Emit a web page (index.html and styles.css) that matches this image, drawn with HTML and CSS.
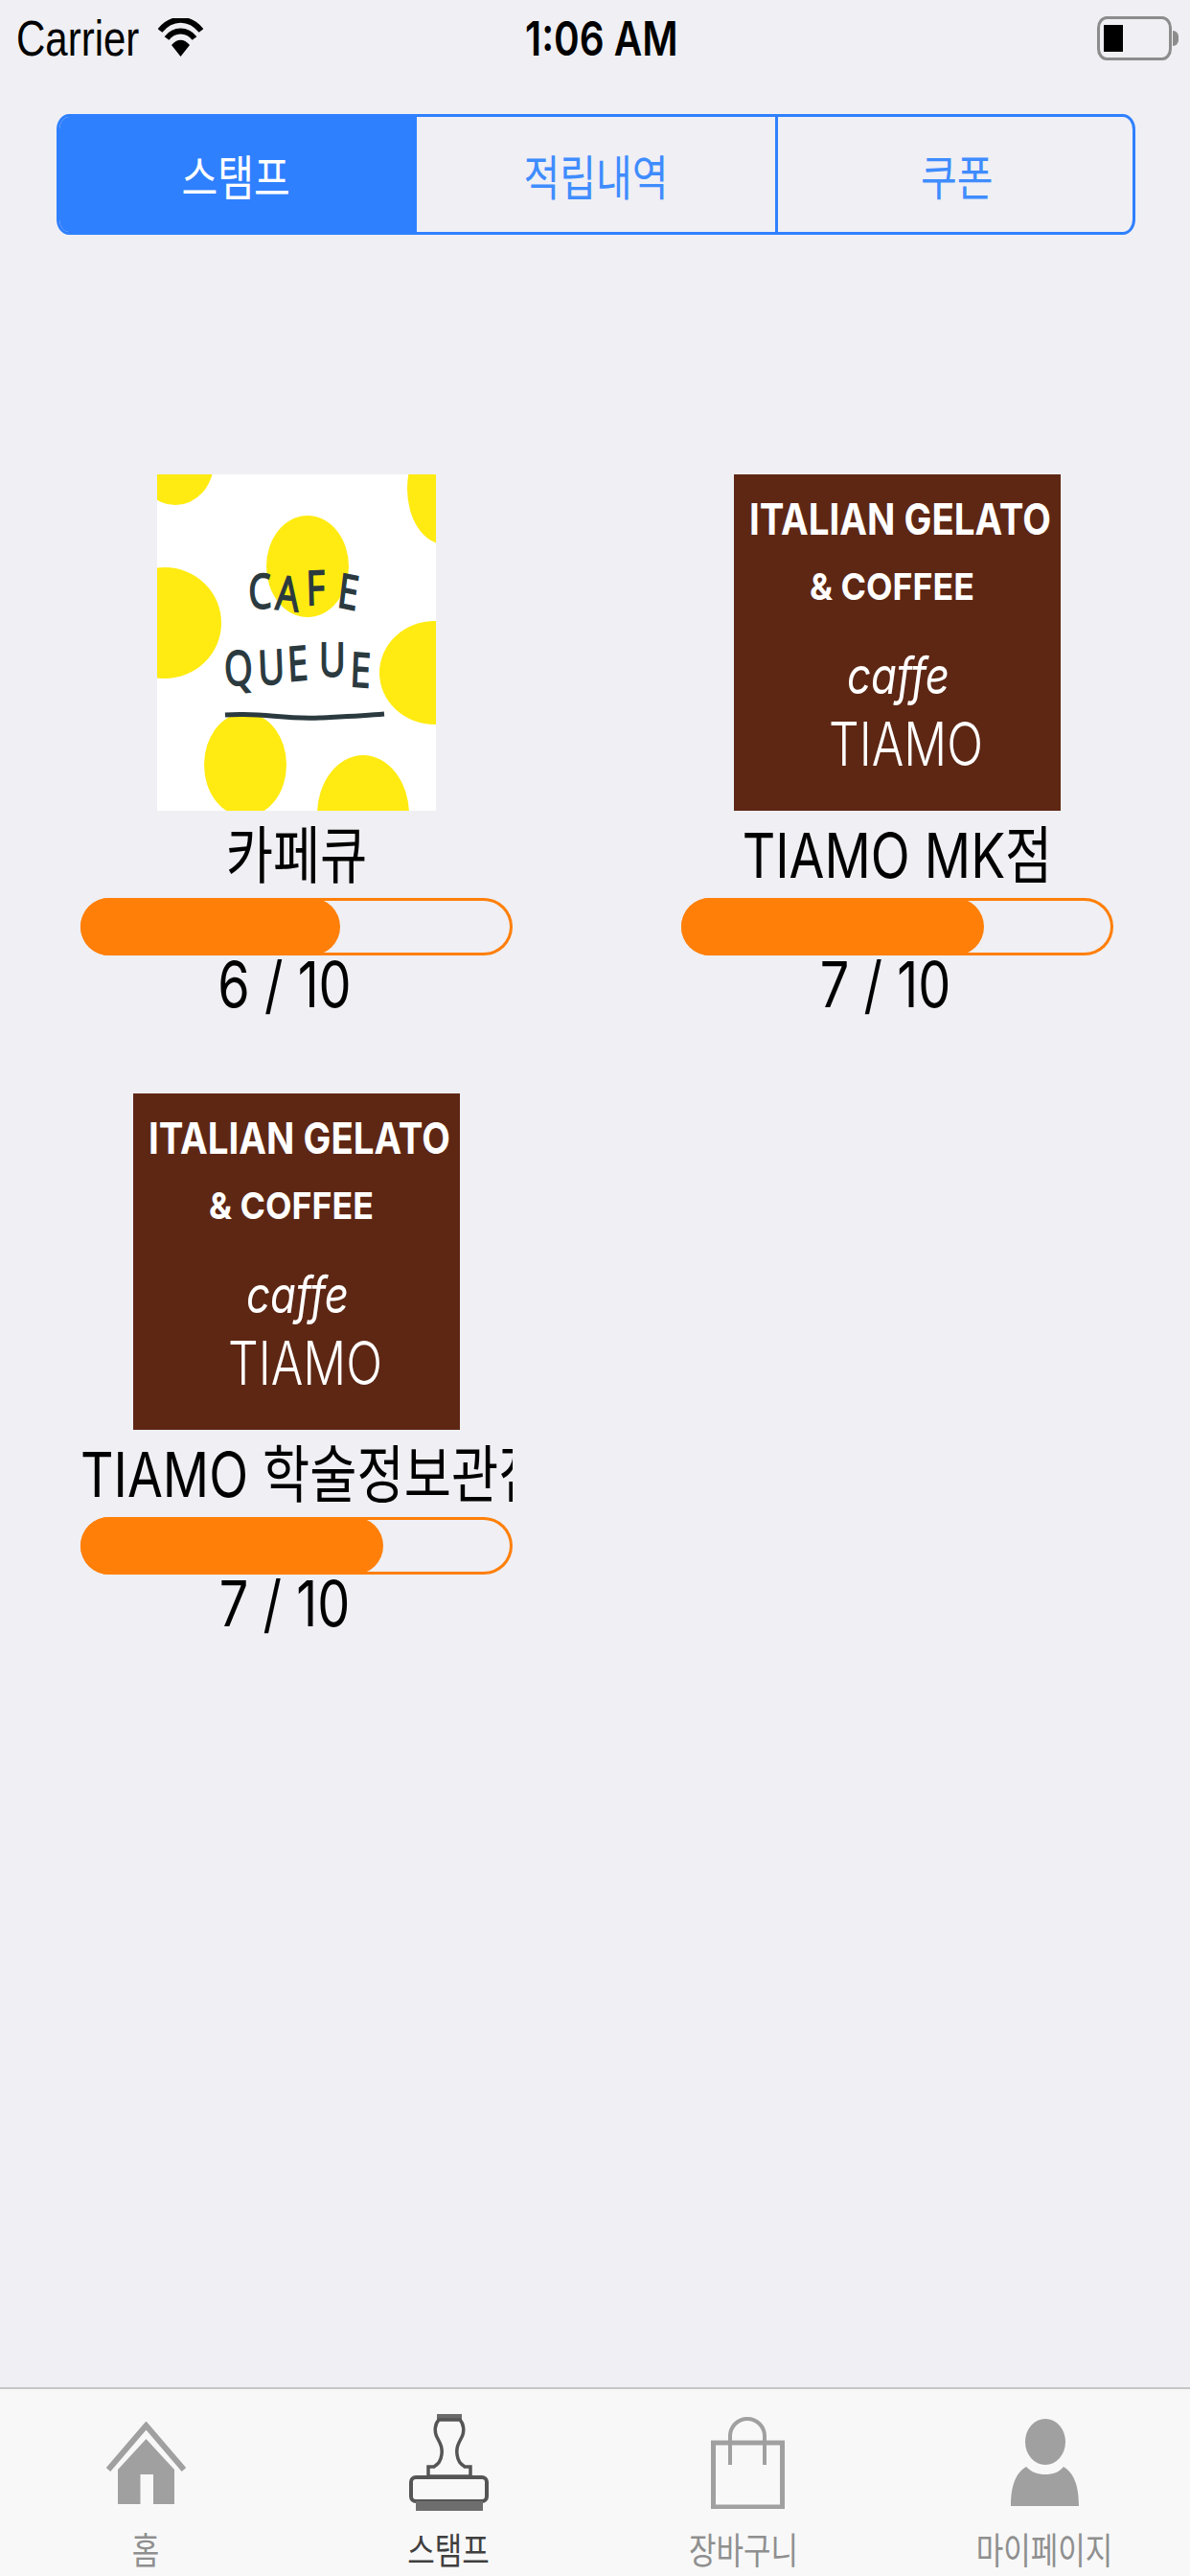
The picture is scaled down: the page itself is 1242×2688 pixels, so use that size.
FILE: index.html
```html
<!DOCTYPE html>
<html lang="ko">
<head>
    <meta charset="UTF-8">
    <meta name="viewport" content="width=device-width, initial-scale=1.0">
    <title>스탬프</title>
    <link rel="stylesheet" href="styles.css">
</head>
<body>

    <div class="status-bar">
        <div class="status-left">
            <span class="carrier">Carrier</span>
            <svg class="wifi" viewBox="0 0 47 40" width="47" height="40">
                <path d="M2 13C14-2 33-2 45 13" fill="none" stroke="#000" stroke-width="6"/>
                <path d="M9 21C17 11 30 11 38 21" fill="none" stroke="#000" stroke-width="6"/>
                <path d="M14 28C20 21 27 21 33 28L23.5 40Z" fill="#000"/>
            </svg>
        </div>
        <span class="time">1:06 AM</span>
        <div class="battery">
            <div class="battery-level"></div>
        </div>
        <div class="battery-nub"></div>
    </div>

    <!-- Section switch -->
    <div class="segments">
        <div class="segment active"><span>스탬프</span></div>
        <div class="segment"><span>적립내역</span></div>
        <div class="segment last"><span>쿠폰</span></div>
    </div>

    <!-- Stamp cards -->
    <div class="cards">
        <div class="card">
            <svg class="logo logo-queue" viewBox="0 0 291 351">
                <rect width="291" height="351" fill="#fff"/>
                <g fill="#ffeb11">
                    <ellipse cx="19" cy="-12" rx="40" ry="44"/>
                    <ellipse cx="300" cy="15" rx="39" ry="58"/>
                    <ellipse cx="157" cy="96" rx="43" ry="53"/>
                    <ellipse cx="8" cy="155" rx="59" ry="58"/>
                    <ellipse cx="290" cy="207" rx="58" ry="54"/>
                    <ellipse cx="92" cy="303" rx="43" ry="54"/>
                    <ellipse cx="215" cy="355" rx="48" ry="62"/>
                </g>
                <g transform="scale(1 1.3)">
                    <text class="hand" x="96 123 156 187" y="108 108 105 106" rotate="-3 5 -2 9">CAFE</text>
                    <text class="hand" x="71 106 137 169 201" y="170 169 166 162 170" rotate="-4 -3 -4 0 3">QUEUE</text>
                </g>
                <path d="M71 251C110 248 130 256 170 254C190 253 215 252 237 250" fill="none" stroke="#2b3a3f" stroke-width="5"/>
            </svg>
            <div class="name">카페큐</div>
            <div class="bar"><div class="fill" style="width:60%"></div></div>
            <div class="count">6 / 10</div>
        </div>

        <div class="card">
            <svg class="logo logo-tiamo" viewBox="0 0 341 351">
                <rect width="341" height="351" fill="#5e2714"/>
                <g transform="scale(1 1.217)" fill="#fff">
                    <text class="tiamo-bold" x="16" y="52" font-size="37" textLength="315" lengthAdjust="spacingAndGlyphs">ITALIAN GELATO</text>
                    <text class="tiamo-bold" x="79" y="108" font-size="32" textLength="172" lengthAdjust="spacingAndGlyphs">&amp; COFFEE</text>
                    <text class="tiamo-italic" x="118" y="188" font-size="44" textLength="107" lengthAdjust="spacingAndGlyphs">caffe</text>
                    <text class="tiamo-light" x="99" y="250" font-size="52" textLength="161" lengthAdjust="spacingAndGlyphs">TIAMO</text>
                </g>
            </svg>
            <div class="name">TIAMO MK점</div>
            <div class="bar"><div class="fill" style="width:70%"></div></div>
            <div class="count">7 / 10</div>
        </div>

        <div class="card">
            <svg class="logo logo-tiamo" viewBox="0 0 341 351">
                <rect width="341" height="351" fill="#5e2714"/>
                <g transform="scale(1 1.217)" fill="#fff">
                    <text class="tiamo-bold" x="16" y="52" font-size="37" textLength="315" lengthAdjust="spacingAndGlyphs">ITALIAN GELATO</text>
                    <text class="tiamo-bold" x="79" y="108" font-size="32" textLength="172" lengthAdjust="spacingAndGlyphs">&amp; COFFEE</text>
                    <text class="tiamo-italic" x="118" y="188" font-size="44" textLength="107" lengthAdjust="spacingAndGlyphs">caffe</text>
                    <text class="tiamo-light" x="99" y="250" font-size="52" textLength="161" lengthAdjust="spacingAndGlyphs">TIAMO</text>
                </g>
            </svg>
            <div class="name long">TIAMO 학술정보관점</div>
            <div class="bar"><div class="fill" style="width:70%"></div></div>
            <div class="count">7 / 10</div>
        </div>
    </div>

    <!-- Bottom navigation -->
    <div class="tab-bar">
        <div class="tab">
            <div class="tab-icon">
                <svg viewBox="0 0 83 86" width="83" height="86">
                    <path d="M41.5 18L71 50V86H49V55H35.5V86H12V50Z" fill="#a0a0a0"/>
                    <path d="M2 50L41.5 4L81 50" fill="none" stroke="#a0a0a0" stroke-width="6"/>
                </svg>
            </div>
            <span class="tab-label">홈</span>
        </div>
        <div class="tab current">
            <div class="tab-icon">
                <svg viewBox="0 0 83 101" width="83" height="101">
                    <rect x="29" y="0" width="26" height="7" fill="#6a6a6a"/>
                    <path d="M31 6C27 10 26 18 29 24C32 30 35 34 34 42C33 50 30 52 26 55H20V65H64V55H58C54 52 51 50 50 42C49 34 52 30 55 24C58 18 57 10 53 6Z" fill="none" stroke="#555" stroke-width="3.5"/>
                    <rect x="2" y="66" width="79" height="25" rx="5" fill="#f8f8f8" stroke="#555" stroke-width="4"/>
                    <rect x="7" y="91" width="70" height="10" fill="#6e6e6e"/>
                </svg>
            </div>
            <span class="tab-label">스탬프</span>
        </div>
        <div class="tab">
            <div class="tab-icon">
                <svg class="bag" viewBox="0 0 77 96" width="77" height="96">
                    <rect x="2.5" y="27" width="72" height="67" fill="none" stroke="#a0a0a0" stroke-width="5"/>
                    <path d="M20 50V20A18 18 0 0 1 56 20V50" fill="none" stroke="#a0a0a0" stroke-width="4"/>
                </svg>
            </div>
            <span class="tab-label">장바구니</span>
        </div>
        <div class="tab">
            <div class="tab-icon">
                <svg viewBox="0 0 71 91" width="71" height="91">
                    <ellipse cx="36" cy="24" rx="21" ry="24" fill="#a0a0a0"/>
                    <path d="M16 50C6 56 0 68 0 91H71C71 68 65 56 55 50C50 56 44 58 36 58C28 58 22 56 16 50Z" fill="#a0a0a0"/>
                </svg>
            </div>
            <span class="tab-label">마이페이지</span>
        </div>
    </div>

</body>
</html>
```

FILE: styles.css
```css
body {
    margin: 0;
    height: 2688px;
    overflow: hidden;
    display: flex;
    flex-direction: column;
    background-color: #efeff4;
    color: #000;
    font-family: Inter, "Noto Sans CJK KR", sans-serif;
}

/* status bar */
.status-bar {
    height: 80px;
    box-sizing: border-box;
    padding: 19px 12px 0 17px;
    display: flex;
    align-items: flex-start;
}
.status-left {
    width: 531px;
    display: flex;
    align-items: flex-start;
    gap: 20px;
}
.carrier, .time {
    display: block;
    line-height: 40px;
    transform: scaleY(1.217);
}
.carrier {
    font-family: "Liberation Sans", sans-serif;
    font-size: 42px;
    margin-top: 2px;
}
.time {
    font-size: 40.5px;
    font-weight: 600;
    margin-top: 2px;
}
.battery {
    margin-left: auto;
    width: 78px;
    height: 46px;
    margin-top: -2px;
    box-sizing: border-box;
    border: 3px solid #8c8c8c;
    border-radius: 10px / 12px;
    padding: 6px 4px;
}
.battery-level {
    width: 20px;
    height: 100%;
    background-color: #000;
}
.battery-nub {
    width: 6px;
    height: 16px;
    margin: 13px 0 0 1px;
    background-color: #8c8c8c;
    border-radius: 0 6px 6px 0;
}

/* segmented control */
.segments {
    margin: 39px 57px 0 59px;
    height: 126px;
    box-sizing: border-box;
    border: 3px solid #2f80ff;
    border-radius: 13px / 16px;
    display: grid;
    grid-template-columns: 1fr 1fr 1fr;
    overflow: hidden;
}
.segment {
    display: flex;
    align-items: center;
    justify-content: center;
    color: #3f8cff;
    font-size: 41px;
}
.segment span {
    transform: scaleY(1.217);
}
.segment.last {
    border-left: 3px solid #2f80ff;
    padding-left: 4px;
}
.segment.active {
    background-color: #2f80ff;
    color: #fff;
    padding-right: 5px;
}

/* stamp cards */
.cards {
    margin-top: 250px;
    padding-left: 84px;
    display: grid;
    grid-template-columns: 451px 451px;
    column-gap: 176px;
    row-gap: 88px;
}
.card {
    display: flex;
    flex-direction: column;
    align-items: center;
    width: 451px;
}
.logo {
    display: block;
    height: 351px;
}
.logo-queue {
    width: 291px;
}
.logo-tiamo {
    width: 341px;
}
.hand {
    font-family: "Open Sans", sans-serif;
    font-size: 38px;
    fill: #2b3a3f;
    stroke: #2b3a3f;
    stroke-width: 1.4px;
}
.tiamo-bold {
    font-family: Inter, sans-serif;
    font-weight: 700;
}
.tiamo-italic {
    font-family: Inter, sans-serif;
    font-style: italic;
}
.tiamo-light {
    font-family: Inter, sans-serif;
    font-weight: 300;
}
.name {
    height: 60px;
    margin: 17px 0 14px;
    font-size: 53.5px;
    line-height: 60px;
    white-space: nowrap;
    transform: scaleY(1.217);
}
/* long names run off the card and get cut at its edge */
.name.long {
    width: 100%;
    overflow-x: clip;
}
.bar {
    width: 100%;
    height: 60px;
    border-radius: 30px;
    box-shadow: inset 0 0 0 3px #ff7f08;
}
.fill {
    height: 100%;
    border-radius: 30px;
    background-color: #ff7f08;
}
.count {
    height: 50px;
    margin: 6px 25px 0 0;
    font-size: 54px;
    line-height: 50px;
    transform: scaleY(1.217);
}

/* bottom navigation */
.tab-bar {
    margin-top: auto;
    height: 197px;
    box-sizing: border-box;
    border-top: 2px solid #c6c6c6;
    background-color: #f8f8f8;
    padding: 26px 0 0 52px;
    display: grid;
    grid-template-columns: 316px 308px 314px 200px;
}
.tab {
    width: 200px;
    display: flex;
    flex-direction: column;
    align-items: center;
}
.tab-icon {
    height: 101px;
    display: flex;
    align-items: center;
}
.tab-icon svg {
    display: block;
}
.tab-icon .bag {
    margin-left: 8px;
}
.tab-label {
    margin-top: 25px;
    font-size: 31px;
    line-height: 34px;
    color: #8f8f8f;
    transform: scaleY(1.217);
}
.current .tab-label {
    color: #3f3f3f;
}
```
